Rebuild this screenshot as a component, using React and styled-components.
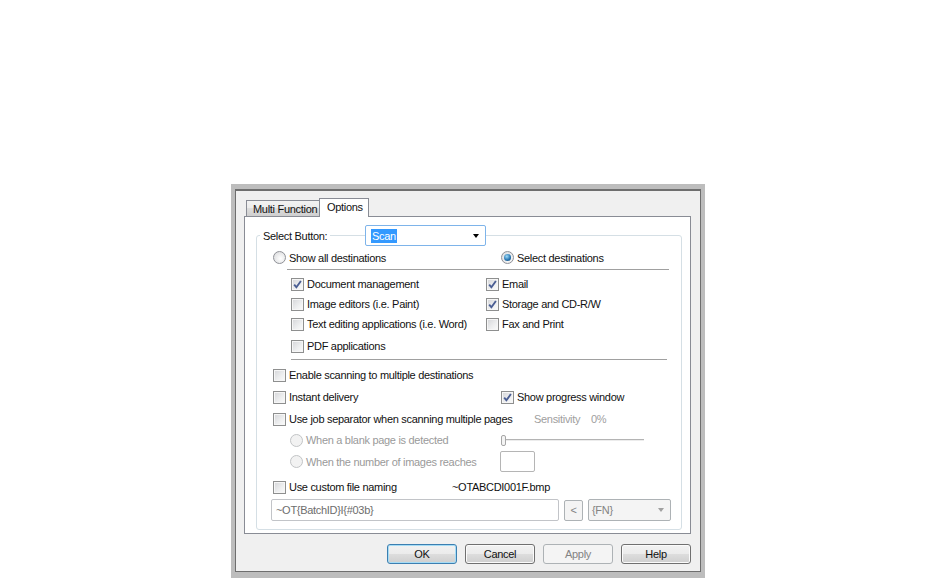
import React from "react";
import styled, { createGlobalStyle, css } from "styled-components";

const GlobalStyle = createGlobalStyle`
  html, body { margin: 0; padding: 0; background: #fff; }
  body {
    font-family: "Liberation Sans", Arial, sans-serif;
    font-size: 11px;
    letter-spacing: -0.3px;
    color: #111;
  }
`;

const Page = styled.div`
  height: 578px;
  overflow: hidden;
  padding: 184px 0 0 231px;
  box-sizing: border-box;
`;

const Window = styled.div`
  width: 474px;
  height: 396px;
  box-sizing: border-box;
  border: 4px solid #bdbdbd;
  border-top-width: 5px;
  border-bottom-width: 8px;
`;

const Frame = styled.div`
  height: 100%;
  box-sizing: border-box;
  border: 1px solid #6e6e6e;
  border-top-width: 2px;
  background: #f0f0f0;
  padding: 7px 9px 0 8px;
  display: flex;
  flex-direction: column;
`;

const TabStrip = styled.div`
  display: flex;
  align-items: flex-end;
  height: 18px;
  padding-left: 2px;
`;

const Tab = styled.div`
  box-sizing: border-box;
  border: 1px solid #898c95;
  border-bottom: none;
  display: flex;
  align-items: center;
  white-space: nowrap;
  overflow: hidden;
  ${(p) =>
    p.$active
      ? css`
          position: relative;
          z-index: 1;
          height: 19px;
          margin-bottom: -1px;
          padding: 0 0 2px 7px;
          width: 50px;
          background: #fff;
        `
      : css`
          height: 16px;
          width: 74px;
          margin-right: -1px;
          padding-left: 6px;
          background: linear-gradient(#f2f2f2, #ebebeb 50%, #dddddd 50%, #cfcfcf);
        `}
`;

const Panel = styled.div`
  height: 318px;
  box-sizing: border-box;
  border: 1px solid #898c95;
  background: #fff;
  padding: 18px 8px 0 11px;
`;

const Group = styled.div`
  height: 295px;
  box-sizing: border-box;
  border: 1px solid #d5dfe5;
  border-radius: 3px;
`;

const GroupHeader = styled.div`
  display: flex;
  align-items: center;
  height: 21px;
  margin-top: -11px;
  padding-left: 3px;
`;

const LegendCell = styled.div`
  width: 105px;
`;

const Legend = styled.span`
  background: #fff;
  padding: 0 3px;
`;

const Combo = styled.div`
  width: 121px;
  height: 21px;
  box-sizing: border-box;
  display: flex;
  align-items: center;
  justify-content: space-between;
  padding: 0 6px 0 5px;
  border: 1px solid ${(p) => (p.$disabled ? "#adb2b5" : "#7eb4ea")};
  border-radius: 2px;
  background: ${(p) => (p.$disabled ? "#f4f4f4" : "#fff")};
  color: ${(p) => (p.$disabled ? "#838383" : "#111")};
  ${(p) =>
    p.$small &&
    css`
      width: 83px;
      height: 22px;
      padding: 0 6px 0 3px;
    `}
`;

const Selected = styled.span`
  background: #3399ff;
  color: #fff;
  padding: 1px 1px;
`;

const Arrow = styled.span`
  width: 0;
  height: 0;
  border-left: 3.5px solid transparent;
  border-right: 3.5px solid transparent;
  border-top: 4px solid ${(p) => (p.$disabled ? "#a0a0a0" : "#000")};
`;

const Body = styled.div`
  padding-left: 16px;
`;

const Row = styled.div`
  display: grid;
  grid-template-columns: ${(p) => p.$col || 228}px 1fr;
  align-items: center;
  height: ${(p) => p.$h || 20}px;
  margin-top: ${(p) => p.$mt || 0}px;
  padding-left: ${(p) => p.$indent || 0}px;
`;

const Separator = styled.div`
  height: 1px;
  background: #a0a0a0;
  margin-top: ${(p) => p.$mt}px;
  margin-left: ${(p) => p.$left}px;
  width: ${(p) => p.$w}px;
`;

const OptionLabel = styled.label`
  display: flex;
  align-items: center;
  gap: 3px;
  white-space: nowrap;
  color: ${(p) => (p.$disabled ? "#9a9a9a" : "#111")};
`;

const Box = styled.span`
  width: 13px;
  height: 13px;
  box-sizing: border-box;
  flex: none;
  display: flex;
  align-items: center;
  justify-content: center;
  border: 1px solid #8e8f8f;
  background: linear-gradient(135deg, #d4d5d8 0%, #eeeff0 60%, #fbfbfb 100%);
  box-shadow: inset 0 0 0 1px #f6f6f6;
`;

const RadioCircle = styled.span`
  width: 13px;
  height: 13px;
  box-sizing: border-box;
  flex: none;
  border-radius: 50%;
  display: flex;
  align-items: center;
  justify-content: center;
  border: 1px solid ${(p) => (p.$disabled ? "#c2c4c6" : "#8f9197")};
  background: ${(p) =>
    p.$disabled
      ? "#f2f2f2"
      : "radial-gradient(circle at 60% 60%, #ffffff, #d6d7d9)"};
  &::after {
    content: "";
    display: ${(p) => (p.$checked ? "block" : "none")};
    width: 7px;
    height: 7px;
    border-radius: 50%;
    background: radial-gradient(circle at 40% 35%, #9fdcf8, #2a78b4 55%, #0f3d66);
  }
`;

const DimText = styled.span`
  color: #a0a0a0;
  padding-left: ${(p) => p.$pad || 0}px;
  word-spacing: ${(p) => p.$ws || 0}px;
`;

const Slider = styled.div`
  width: 143px;
  height: 12px;
  display: flex;
  align-items: center;
`;

const Thumb = styled.span`
  width: 5px;
  height: 11px;
  box-sizing: border-box;
  border: 1px solid #a7a7a7;
  border-radius: 2px;
  background: #f4f4f4;
  flex: none;
`;

const Track = styled.span`
  flex: 1;
  height: 1px;
  background: #b4b4b4;
  border-bottom: 1px solid #ececec;
`;

const SmallInput = styled.div`
  width: 35px;
  height: 21px;
  box-sizing: border-box;
  border: 1px solid #b5b5b5;
  border-radius: 2px;
  background: #fff;
`;

const NamingRow = styled.div`
  display: flex;
  align-items: center;
  gap: 5px;
  margin: 2px 0 0 -2px;
`;

const TextInput = styled.div`
  width: 288px;
  height: 22px;
  box-sizing: border-box;
  display: flex;
  align-items: center;
  padding-left: 4px;
  border: 1px solid #c2c4c8;
  border-radius: 2px;
  background: #fff;
  color: #6d6d6d;
`;

const TinyButton = styled.div`
  width: 19px;
  height: 21px;
  box-sizing: border-box;
  display: flex;
  align-items: center;
  justify-content: center;
  border: 1px solid #adb2b5;
  border-radius: 2px;
  background: #f4f4f4;
  color: #838383;
`;

const ButtonBar = styled.div`
  display: flex;
  justify-content: flex-end;
  gap: 8px;
  margin-top: 10px;
`;

const Button = styled.button`
  width: 70px;
  height: 20px;
  box-sizing: border-box;
  padding: 0;
  font: inherit;
  letter-spacing: inherit;
  color: #111;
  border: 1px solid #707070;
  border-radius: 3px;
  background: linear-gradient(#f2f2f2, #ebebeb 50%, #dddddd 50%, #cfcfcf);
  box-shadow: inset 0 0 0 1px #fbfbfb;
  ${(p) =>
    p.$default &&
    css`
      border-color: #3c7fb1;
      box-shadow: inset 0 0 0 1px #a6dcf5;
    `}
  ${(p) =>
    p.disabled &&
    css`
      border-color: #adb2b5;
      background: #f4f4f4;
      box-shadow: none;
      color: #838383;
    `}
`;

const Check = ({ checked }) => (
  <Box>
    {checked && (
      <svg width="9" height="9" viewBox="0 0 9 9">
        <path d="M1.2 4.6 L3.4 7.3 L7.9 1" fill="none" stroke="#4a5e93" strokeWidth="1.9" />
      </svg>
    )}
  </Box>
);

const CheckOption = ({ checked, children }) => (
  <OptionLabel>
    <Check checked={checked} />
    {children}
  </OptionLabel>
);

const RadioOption = ({ checked, disabled, children }) => (
  <OptionLabel $disabled={disabled}>
    <RadioCircle $checked={checked} $disabled={disabled} />
    {children}
  </OptionLabel>
);

export default function App() {
  return (
    <Page>
      <GlobalStyle />
      <Window>
        <Frame>
          <TabStrip>
            <Tab>Multi Function</Tab>
            <Tab $active>Options</Tab>
          </TabStrip>
          <Panel>
            <Group>
              <GroupHeader>
                <LegendCell>
                  <Legend>Select Button:</Legend>
                </LegendCell>
                <Combo>
                  <Selected>Scan</Selected>
                  <Arrow />
                </Combo>
              </GroupHeader>
              <Body>
                <Row $h={15} $mt={4}>
                  <RadioOption>Show all destinations</RadioOption>
                  <RadioOption checked>Select destinations</RadioOption>
                </Row>
                <Separator $mt={4} $left={14} $w={382} />
                <Row $col={195} $indent={18} $mt={4}>
                  <CheckOption checked>Document management</CheckOption>
                  <CheckOption checked>Email</CheckOption>
                </Row>
                <Row $col={195} $indent={18}>
                  <CheckOption>Image editors (i.e. Paint)</CheckOption>
                  <CheckOption checked>Storage and CD-R/W</CheckOption>
                </Row>
                <Row $col={195} $indent={18}>
                  <CheckOption>Text editing applications (i.e. Word)</CheckOption>
                  <CheckOption>Fax and Print</CheckOption>
                </Row>
                <Row $col={195} $indent={18} $mt={2}>
                  <CheckOption>PDF applications</CheckOption>
                </Row>
                <Separator $mt={3} $left={18} $w={376} />
                <Row $mt={5}>
                  <CheckOption>Enable scanning to multiple destinations</CheckOption>
                </Row>
                <Row $mt={2}>
                  <CheckOption>Instant delivery</CheckOption>
                  <CheckOption checked>Show progress window</CheckOption>
                </Row>
                <Row $mt={2}>
                  <CheckOption>Use job separator when scanning multiple pages</CheckOption>
                  <DimText $pad={33} $ws={8}>Sensitivity 0%</DimText>
                </Row>
                <Row $col={211} $indent={17} $mt={1}>
                  <RadioOption disabled>When a blank page is detected</RadioOption>
                  <Slider>
                    <Thumb />
                    <Track />
                  </Slider>
                </Row>
                <Row $col={210} $indent={17} $h={21} $mt={1}>
                  <RadioOption disabled>When the number of images reaches</RadioOption>
                  <SmallInput />
                </Row>
                <Row $col={179} $mt={5}>
                  <CheckOption>Use custom file naming</CheckOption>
                  <span>~OTABCDI001F.bmp</span>
                </Row>
                <NamingRow>
                  <TextInput>~OT{"{BatchID}"}I{"{#03b}"}</TextInput>
                  <TinyButton>&lt;</TinyButton>
                  <Combo $small $disabled>
                    <span>{"{FN}"}</span>
                    <Arrow $disabled />
                  </Combo>
                </NamingRow>
              </Body>
            </Group>
          </Panel>
          <ButtonBar>
            <Button $default>OK</Button>
            <Button>Cancel</Button>
            <Button disabled>Apply</Button>
            <Button>Help</Button>
          </ButtonBar>
        </Frame>
      </Window>
    </Page>
  );
}
